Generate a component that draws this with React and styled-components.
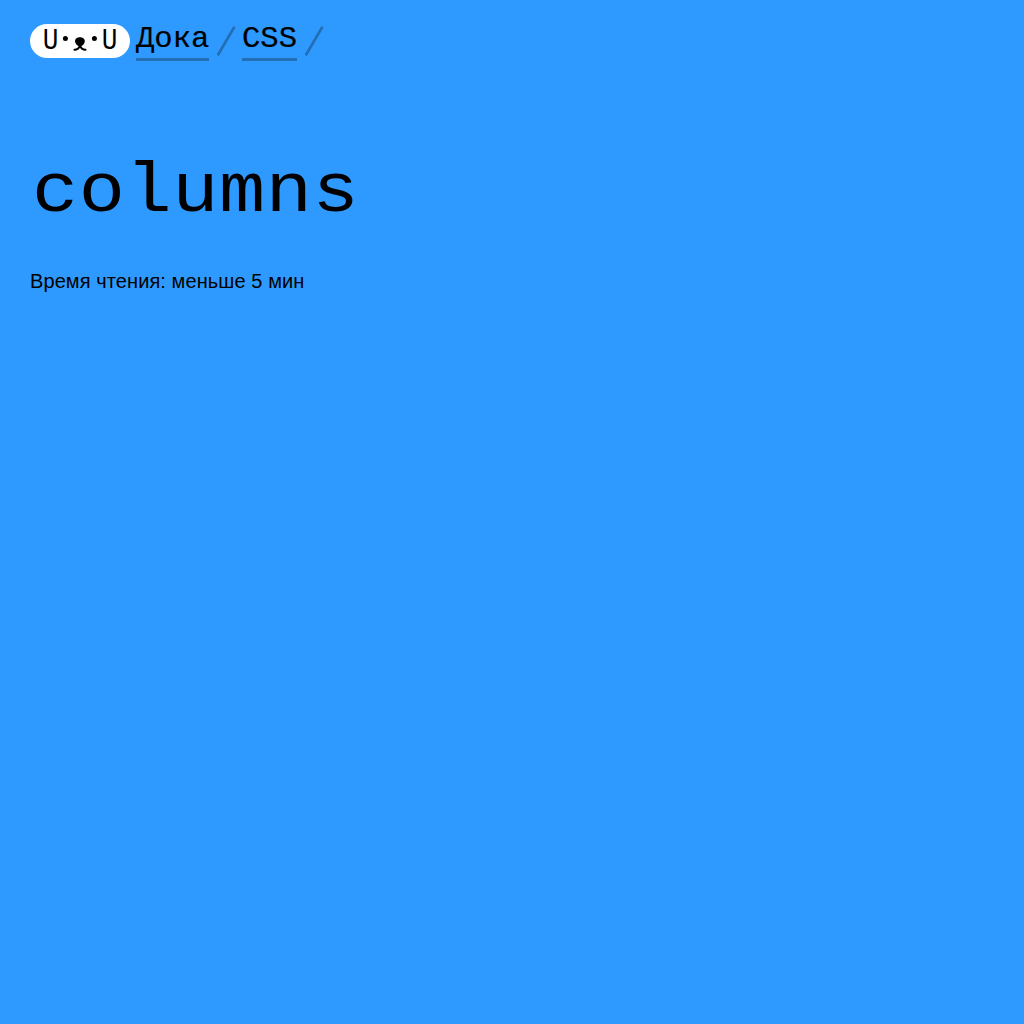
import React from 'react';
import styled, { createGlobalStyle } from 'styled-components';

const GlobalStyle = createGlobalStyle`
  *, *::before, *::after { box-sizing: border-box; }
  body {
    margin: 0;
    background: #2e9aff;
    color: #000;
    font-family: "Liberation Sans", Arial, sans-serif;
  }
`;

const Page = styled.div`
  min-height: 100vh;
  padding: 24px 30px;
`;

const Breadcrumbs = styled.nav`
  display: flex;
  align-items: flex-start;
  height: 37px;
  font-family: "Liberation Mono", monospace;
`;

const Logo = styled.a`
  display: flex;
  align-items: center;
  justify-content: center;
  width: 100px;
  height: 34px;
  margin-right: 6px;
  border-radius: 17px;
  background: #fff;
`;

const Ear = styled.span`
  width: 15px;
  padding-top: 2px;
  font: 29px/34px "Liberation Mono", monospace;
  text-align: center;
  text-indent: -1px;
  transform: scaleX(0.9);
`;

const Face = styled.svg`
  display: block;
  width: 44px;
  height: 34px;
`;

const Crumb = styled.a`
  width: ${({ $width }) => $width}px;
  height: 37px;
  border-bottom: 3px solid #246eb3;
  font-size: 29px;
  line-height: 32px;
  white-space: nowrap;
`;

const CrumbLabel = styled.span`
  display: inline-block;
  transform: scaleX(1.055);
  transform-origin: 0 50%;
  -webkit-text-stroke: 0.2px #000;
`;

const SlashIcon = styled.svg`
  display: block;
  width: 33px;
  height: 34px;
`;

const Title = styled.h1`
  margin: 85px 0 0;
  height: 94px;
  padding-left: 2px;
  font: 400 70px/94px "Liberation Mono", monospace;
`;

const TitleText = styled.span`
  display: inline-block;
  letter-spacing: 0.5px;
  transform: scaleX(1.1);
  transform-origin: 0 50%;
`;

const ReadingTime = styled.p`
  margin: 29px 0 0;
  font-size: 20px;
  line-height: 24px;
  letter-spacing: 0.09px;
`;

function Slash() {
  return (
    <SlashIcon viewBox="0 0 33 34" aria-hidden="true">
      <path d="M9.2 30.5L25 3.5" stroke="#246eb3" strokeWidth="2.6" strokeLinecap="round" />
    </SlashIcon>
  );
}

export default function App() {
  return (
    <>
      <GlobalStyle />
      <Page>
        <Breadcrumbs>
          <Logo aria-label="Дока">
            <Ear>U</Ear>
            <Face viewBox="58 24 44 34" aria-hidden="true">
              <circle cx="65.4" cy="38.5" r="2.5" />
              <circle cx="94.4" cy="38.5" r="2.5" />
              <path d="M75 41C75 35.9 84.8 35.9 84.8 41C84.8 43.6 83 45.8 80 46.4C77 45.8 75 43.6 75 41Z" />
              <path d="M80 44V45.5Q78.5 49.8 74.5 49.8M80 45.5Q81.5 49.8 85.5 49.8" fill="none" stroke="#000" strokeWidth="2.1" strokeLinecap="round" />
            </Face>
            <Ear>U</Ear>
          </Logo>
          <Crumb $width={73}><CrumbLabel>Дока</CrumbLabel></Crumb>
          <Slash />
          <Crumb $width={55}><CrumbLabel>CSS</CrumbLabel></Crumb>
          <Slash />
        </Breadcrumbs>
        <Title><TitleText>columns</TitleText></Title>
        <ReadingTime>Время чтения: меньше 5 мин</ReadingTime>
      </Page>
    </>
  );
}
